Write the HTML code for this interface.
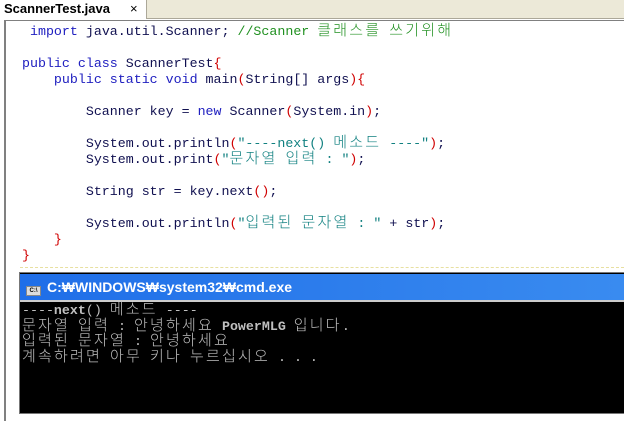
<html><head><style>
body{margin:0;width:624px;height:401px;overflow:hidden;background:#fff;position:relative;font-family:"Liberation Mono","Noto Sans CJK KR",monospace}
.tabbar{position:absolute;left:0;top:0;width:624px;height:18px;background:#ece9d8;border-bottom:1px solid #aca899}
.tab{position:absolute;left:0;top:0;width:147px;height:19px;background:#fff;border-right:1px solid #aca899;font:bold 13px "Liberation Sans",sans-serif;line-height:18px;padding-left:4px;box-sizing:border-box}
.tab span{position:absolute;left:130px;font-weight:normal}
.ed{position:absolute;left:4px;top:20px;width:640px;height:400px;border-left:2px solid #808080;border-top:1px solid #808080}
.l{position:absolute;font-size:13.3px;line-height:16px;height:16px;color:#101050;white-space:pre}
.h{font-size:15px;letter-spacing:2.2px;line-height:10px;font-weight:300}
.k{color:#2020c0}.s{color:#108080}.p{color:#d00000}.c{color:#209020}
.dash{position:absolute;left:20px;top:267px;width:604px;border-top:1px dashed #e8e0a0}
.cmd{position:absolute;left:19px;top:272px;width:620px;height:140px;background:#000;border:1px solid #777}
.title{position:absolute;left:0;top:1px;width:100%;height:26px;background:linear-gradient(90deg,#1f6ee8,#3a8cf0);color:#fff;font:bold 14px "Liberation Sans",sans-serif;line-height:26px;border-bottom:2px solid #ccc}
.ico{display:inline-block;width:13px;height:8px;background:#ddd;border:1px solid #888;margin:0 6px 0 6px;vertical-align:0;font:bold 6px "Liberation Sans";color:#000;line-height:8px;text-align:center}
.o{position:absolute;left:2px;color:#c0c0c0;font-size:13.3px;line-height:15.5px;height:15.5px;white-space:pre}
</style></head><body>
<div class="tabbar"><div class="tab">ScannerTest.java<span>×</span></div></div>
<div class="ed"></div>
<div class="l" style="left:22px;top:24px"> <span class="k">import</span> java.util.Scanner; <span class="c">//Scanner <span class="h">클래스를</span> <span class="h">쓰기위해</span></span></div>
<div class="l" style="left:22px;top:56px"><span class="k">public class</span> ScannerTest<span class="p">{</span></div>
<div class="l" style="left:22px;top:72px">    <span class="k">public static void</span> main<span class="p">(</span>String[] args<span class="p">){</span></div>
<div class="l" style="left:22px;top:104px">        Scanner key = <span class="k">new</span> Scanner<span class="p">(</span>System.in<span class="p">)</span>;</div>
<div class="l" style="left:22px;top:136px">        System.out.println<span class="p">(</span><span class="s">"----next() <span class="h">메소드</span> ----"</span><span class="p">)</span>;</div>
<div class="l" style="left:22px;top:152px">        System.out.print<span class="p">(</span><span class="s">"<span class="h">문자열</span> <span class="h">입력</span> : "</span><span class="p">)</span>;</div>
<div class="l" style="left:22px;top:184px">        String str = key.next<span class="p">()</span>;</div>
<div class="l" style="left:22px;top:216px">        System.out.println<span class="p">(</span><span class="s">"<span class="h">입력된</span> <span class="h">문자열</span> : "</span> + str<span class="p">)</span>;</div>
<div class="l" style="left:22px;top:232px">    <span class="p">}</span></div>
<div class="l" style="left:22px;top:248px"><span class="p">}</span></div>
<div class="dash"></div>
<div class="cmd">
<div class="title"><span class="ico">C:\</span>C:₩WINDOWS₩system32₩cmd.exe</div>
<div class="o" style="top:30px">----<b>next</b>() <span class="h">메소드</span> ----</div>
<div class="o" style="top:45.5px"><span class="h">문자열</span> <span class="h">입력</span> : <span class="h">안녕하세요</span> <b>PowerMLG</b> <span class="h">입니다</span>.</div>
<div class="o" style="top:61px"><span class="h">입력된</span> <span class="h">문자열</span> : <span class="h">안녕하세요</span></div>
<div class="o" style="top:76.5px"><span class="h">계속하려면</span> <span class="h">아무</span> <span class="h">키나</span> <span class="h">누르십시오</span> . . .</div>
</div>
</body></html>
